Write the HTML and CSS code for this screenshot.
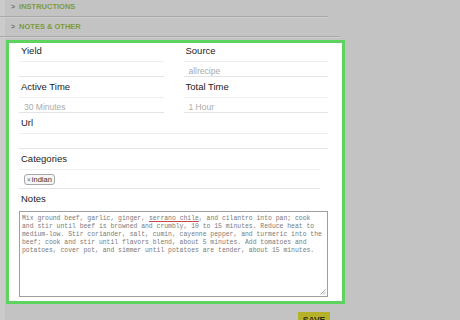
FILE: index.html
```html
<!DOCTYPE html>
<html>
<head>
<meta charset="utf-8">
<link rel="stylesheet" href="styles.css">
</head>
<body>
<div class="page">
  <div class="sect sect-first"><span class="chev">&gt;</span><span class="sect-title">INSTRUCTIONS</span></div>
  <div class="sect sect-second"><span class="chev">&gt;</span><span class="sect-title">NOTES &amp; OTHER</span></div>

  <div class="box">
    <div class="grid">
      <div class="field">
        <div class="label">Yield</div>
        <div class="input"></div>
      </div>
      <div class="field">
        <div class="label">Source</div>
        <div class="input ph">allrecipe</div>
      </div>
      <div class="field">
        <div class="label">Active Time</div>
        <div class="input ph">30 Minutes</div>
      </div>
      <div class="field">
        <div class="label">Total Time</div>
        <div class="input ph">1 Hour</div>
      </div>
    </div>
    <div class="field">
      <div class="label">Url</div>
      <div class="input wide"></div>
    </div>
    <div class="field field-cat">
      <div class="label">Categories</div>
      <div class="input cat"><span class="tag"><span class="tag-x">×</span>indian</span></div>
    </div>
    <div class="label">Notes</div>
    <div class="notes"><div class="notes-text">Mix ground beef, garlic, ginger, <span class="sp">serrano chile</span>, and cilantro into pan; cook
and stir until beef is browned and crumbly, 10 to 15 minutes. Reduce heat to
medium-low. Stir coriander, salt, cumin, cayenne pepper, and turmeric into the
beef; cook and stir until flavors blend, about 5 minutes. Add tomatoes and
potatoes, cover pot, and simmer until potatoes are tender, about 15 minutes.</div>
      <svg class="grip" width="6" height="6" viewBox="0 0 6 6"><path d="M5.5 0.5 L0.5 5.5 M5.5 3 L3 5.5" stroke="#888" stroke-width="0.8" fill="none"/></svg>
    </div>
  </div>

  <div class="actions"><button class="save">SAVE</button></div>
</div>
</body>
</html>
```
FILE: styles.css
```css
html, body {
  margin: 0;
  padding: 0;
}
body {
  width: 460px;
  height: 320px;
  overflow: hidden;
  background: linear-gradient(to right, #cbcbcb 0, #cbcbcb 5px, #c3c3c3 5px);
  font-family: "Liberation Sans", Arial, sans-serif;
}
.page {
  display: flex;
  flex-direction: column;
}
.sect {
  display: flex;
  align-items: center;
  padding-left: 11px;
  border-bottom: 1px solid #a9a9a9;
  box-shadow: 0 1px 0 #cfcfcf;
  line-height: 14px;
  box-sizing: border-box;
}
.sect-first {
  width: 328px;
  height: 17px;
  padding-bottom: 3px;
}
.sect-second {
  width: 340px;
  height: 20px;
  padding-top: 1px;
}
.chev {
  font-size: 7px;
  color: #6d6d6d;
  font-weight: bold;
  margin-right: 4px;
}
.sect-title {
  font-size: 7.5px;
  font-weight: bold;
  color: #7e9a3c;
}
.box {
  margin: 3px 0 0 6px;
  width: 339px;
  box-sizing: border-box;
  border: 3px solid #5fd35f;
  background: #ffffff;
  padding: 2px 14px 4px 10px;
}
.grid {
  display: grid;
  grid-template-columns: 1fr 1fr;
  column-gap: 20px;
}
.field {
  height: 36px;
}
.field-cat {
  height: 40px;
}
.label {
  height: 12px;
  line-height: 12px;
  font-size: 9.5px;
  color: #1c1c1c;
  padding-left: 2px;
}
.input {
  margin-top: 4px;
  height: 16px;
  box-sizing: border-box;
  border-top: 1px solid #eeeeee;
  border-bottom: 1px solid #e4e4e4;
  padding-left: 5px;
  padding-top: 2px;
  font-size: 8.5px;
  line-height: 14px;
  color: #ababab;
}
.cat {
  height: 20px;
  display: flex;
  align-items: center;
  padding-top: 0;
  padding-left: 5px;
  margin-right: 8px;
}
.tag {
  display: inline-flex;
  align-items: center;
  height: 9px;
  padding: 0 2px 0 2px;
  border: 1px solid #a8a8a8;
  border-radius: 3px;
  background: #f6f6f6;
  font-size: 7.5px;
  line-height: 9px;
  color: #333;
}
.tag-x {
  font-size: 6.5px;
  color: #666;
  margin-right: 1px;
}
.notes {
  position: relative;
  margin-top: 6px;
  height: 86px;
  box-sizing: border-box;
  border: 1px solid #9e9e9e;
  padding: 3px 2px 0 2px;
  background: #fff;
}
.notes-text {
  white-space: pre;
  font-family: "Liberation Mono", "DejaVu Sans Mono", monospace;
  font-size: 6.42px;
  line-height: 8px;
  color: #7a7a7a;
}
.sp {
  text-decoration: underline solid #c84848;
  text-decoration-thickness: 1px;
  text-underline-offset: 1px;
}
.grip {
  position: absolute;
  right: 1px;
  bottom: 1px;
}
.actions {
  width: 339px;
  margin-left: 6px;
  display: flex;
  justify-content: flex-end;
  padding-right: 15px;
  box-sizing: border-box;
  margin-top: 8px;
}
.save {
  width: 32px;
  height: 16px;
  border: none;
  padding: 0;
  background: #b5b22a;
  font-family: "Liberation Sans", Arial, sans-serif;
  font-size: 8.5px;
  font-weight: bold;
  color: #2d2d12;
  line-height: 16px;
  text-align: center;
}
```
